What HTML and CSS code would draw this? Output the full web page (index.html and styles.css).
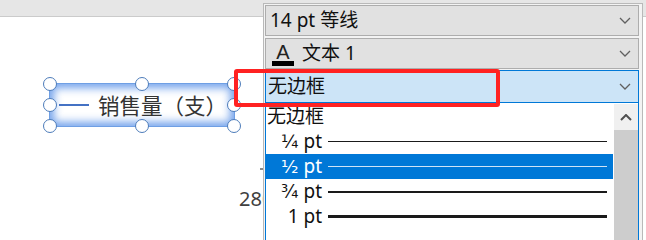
FILE: index.html
```html
<!DOCTYPE html>
<html lang="zh-CN">
<head>
<meta charset="utf-8">
<link rel="stylesheet" href="styles.css">
</head>
<body>
<div class="app">
  <div class="toolbar"></div>
  <div class="canvas">
    <div class="textbox">
      <span class="legend-line"></span>
      <span class="label">销售量（支）</span>
      <span class="handle h-tl"></span><span class="handle h-tm"></span><span class="handle h-tr"></span>
      <span class="handle h-ml"></span><span class="handle h-mr"></span>
      <span class="handle h-bl"></span><span class="handle h-bm"></span><span class="handle h-br"></span>
    </div>
    <div class="tick"></div>
    <div class="axis-value">280</div>
  </div>

  <div class="panel">
    <div class="combo combo-font">
      <span class="combo-text">14 pt 等线</span>
      <svg class="chev" viewBox="0 0 12 7" width="12" height="7"><path d="M1 1 L6 6 L11 1" fill="none" stroke="#606060" stroke-width="1.3"/></svg>
    </div>
    <div class="combo combo-color">
      <span class="combo-text"><span class="font-icon"><span class="font-a">A</span><span class="font-bar"></span></span>文本 1</span>
      <svg class="chev" viewBox="0 0 12 7" width="12" height="7"><path d="M1 1 L6 6 L11 1" fill="none" stroke="#606060" stroke-width="1.3"/></svg>
    </div>
    <div class="combo combo-active">
      <span class="combo-text">无边框</span>
      <svg class="chev" viewBox="0 0 12 7" width="12" height="7"><path d="M1 1 L6 6 L11 1" fill="none" stroke="#606060" stroke-width="1.3"/></svg>
    </div>
    <div class="list">
      <div class="items">
        <div class="item item-none">无边框</div>
        <div class="item"><span class="item-label"><span class="frac">¼</span> pt</span><span class="item-line w1"></span></div>
        <div class="item item-selected"><span class="item-label"><span class="frac">½</span> pt</span><span class="item-line w1s"></span></div>
        <div class="item"><span class="item-label"><span class="frac">¾</span> pt</span><span class="item-line w2"></span></div>
        <div class="item"><span class="item-label">1 pt</span><span class="item-line w3"></span></div>
      </div>
      <div class="scrollbar">
        <div class="scroll-btn">
          <svg viewBox="0 0 12 7" width="12" height="7"><path d="M1 6 L6 1 L11 6" fill="none" stroke="#505050" stroke-width="2"/></svg>
        </div>
        <div class="scroll-thumb"></div>
      </div>
    </div>
  </div>

  <div class="callout"></div>
</div>
</body>
</html>
```
FILE: styles.css
```css
html, body {
  margin: 0;
  padding: 0;
  background: #ffffff;
}
body {
  font-family: "Noto Sans", "Noto Sans CJK SC", sans-serif;
  color: #000;
}
.app {
  position: relative;
  width: 646px;
  height: 240px;
  overflow: hidden;
  display: flex;
  flex-direction: column;
}
.toolbar {
  height: 16px;
  flex: none;
  background: #e6e6e6;
  border-bottom: 1px solid #cbcbcb;
}
.canvas {
  position: relative;
  flex: 1;
  background: #fff;
}

/* selected text box on the chart canvas */
.textbox {
  position: absolute;
  left: 49px;
  top: 66px;
  width: 186px;
  height: 44px;
  box-sizing: border-box;
  border: 1px solid #6f9fe4;
  box-shadow: inset 0 0 8px 4px rgba(88, 145, 232, 0.85);
  display: flex;
  align-items: center;
  padding-left: 9px;
}
.legend-line {
  width: 30px;
  height: 2px;
  background: #4472c4;
  margin-right: 9px;
}
.label {
  font-family: "Noto Sans CJK SC", sans-serif;
  font-size: 21.5px;
  color: #333;
  line-height: 1;
}
.handle {
  position: absolute;
  width: 12px;
  height: 12px;
  border: 1.5px solid #4d7cba;
  border-radius: 50%;
  background: #fff;
  margin: -7.5px 0 0 -7.5px;
}
.h-tl { left: 0; top: 0; }
.h-tm { left: 50%; top: 0; }
.h-tr { left: 100%; top: 0; }
.h-ml { left: 0; top: 50%; }
.h-mr { left: 100%; top: 50%; }
.h-bl { left: 0; top: 100%; }
.h-bm { left: 50%; top: 100%; }
.h-br { left: 100%; top: 100%; }

.tick {
  position: absolute;
  left: 260px;
  top: 151px;
  width: 3px;
  height: 2px;
  background: #8a8a8a;
}
.axis-value {
  position: absolute;
  left: 239px;
  top: 170px;
  font-family: "Noto Sans", sans-serif;
  font-size: 20px;
  color: #404040;
  line-height: 24px;
}

/* format dropdown panel */
.panel {
  position: absolute;
  left: 263px;
  top: 3px;
  width: 380px;
  height: 240px;
  box-sizing: border-box;
  border: 1px solid #b9b9b9;
  border-bottom: none;
  background: #f3f3f3;
  padding: 1px 3px 0 1px;
  display: flex;
  flex-direction: column;
  z-index: 2;
}
.combo {
  flex: none;
  height: 31px;
  box-sizing: border-box;
  border: 1px solid #adadad;
  background: #e1e1e1;
  display: flex;
  align-items: center;
  justify-content: space-between;
  padding: 0 7px 0 4px;
  font-size: 19px;
  color: #111;
}
.combo-font { margin-bottom: 2px; }
.combo-color { margin-bottom: 1px; padding-left: 6px; }
.combo-active {
  height: 33px;
  background: #cce4f7;
  border-color: #0078d7;
  padding-left: 2px;
}
.combo-text {
  display: flex;
  align-items: center;
  line-height: 1;
  white-space: nowrap;
}
.font-icon {
  display: inline-flex;
  flex-direction: column;
  align-items: center;
  width: 22px;
  margin-right: 8px;
  margin-top: 2px;
}
.font-a {
  font-family: "Liberation Sans", sans-serif;
  font-size: 20px;
  font-weight: 400;
  line-height: 16px;
  color: #222;
}
.font-bar {
  width: 22px;
  height: 5px;
  background: #000;
  margin-top: 1px;
}
.chev { flex: none; }

.list {
  flex: 1;
  display: flex;
  border: 1px solid #0078d7;
  border-top: none;
  background: #fff;
  padding-top: 1px;
}
.items {
  flex: 1;
  display: flex;
  flex-direction: column;
  margin-right: 1px;
}
.item {
  height: 25px;
  display: flex;
  align-items: center;
  font-size: 19px;
  color: #111;
  line-height: 1;
}
.item-none {
  padding-left: 1px;
}
.item-label {
  width: 56px;
  text-align: right;
  white-space: nowrap;
}
.frac {
  font-family: "DejaVu Sans", sans-serif;
  font-size: 18px;
}
.item-line {
  flex: 1;
  margin: 0 6px 0 6px;
  background: #1a1a1a;
}
.w1 { height: 1px; }
.w1s { height: 1.5px; background: #cfe3f6; }
.w2 { height: 2px; }
.w3 { height: 3px; }
.item-selected {
  background: #0078d7;
  color: #fff;
}
.scrollbar {
  width: 24px;
  display: flex;
  flex-direction: column;
  background: #f0f0f0;
}
.scroll-btn {
  height: 26px;
  display: flex;
  align-items: center;
  justify-content: center;
}
.scroll-thumb {
  flex: 1;
  background: #cdcdcd;
}

/* annotation */
.callout {
  position: absolute;
  left: 234px;
  top: 69px;
  width: 266px;
  height: 38px;
  box-sizing: border-box;
  border: 4px solid #ff2222;
  border-radius: 3px;
  z-index: 3;
}
```
